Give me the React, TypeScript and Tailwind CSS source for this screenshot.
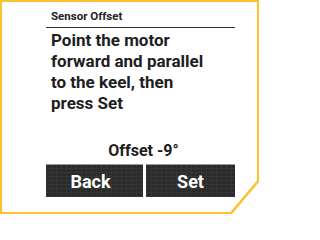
import React from "react";

const btnBg =
  "[background:repeating-linear-gradient(0deg,#363636_0px,#363636_1px,transparent_1px,transparent_4px),repeating-linear-gradient(90deg,#343434_0px,#343434_1px,transparent_1px,transparent_5px),#2a2a2a]";

export default function App() {
  return (
    <div className="w-[259px] h-[215px] bg-white" style={{ fontFamily: 'Roboto, "Noto Sans", sans-serif' }}>
      <div className="w-[259px] h-[214px] p-[2px] bg-[#fbc12e] [clip-path:polygon(0_0,100%_0,100%_182px,232px_100%,0_100%)]">
        <div className="h-full bg-white [clip-path:polygon(0_0,100%_0,100%_178.5px,228.4px_100%,0_100%)] pl-[44px] pr-[22px] pt-[7px] flex flex-col">
          <div className="border-b-[1.5px] border-[#333] pb-[4px]">
            <div className="pl-[5px] text-[11.5px] leading-[14px] font-bold text-[#222]">Sensor Offset</div>
          </div>
          <div className="mt-[2px] pl-[5px] text-[17px] leading-[21px] font-bold text-[#1e1e1e]">
            Point the motor
            <br />
            forward and parallel
            <br />
            to the keel, then
            <br />
            press Set
          </div>
          <div className="mt-[27px] pl-[6px] text-center text-[16px] leading-[20px] font-bold text-[#1e1e1e]">
            Offset -9°
          </div>
          <div className="mt-[3px] flex gap-[3px] h-[33px]">
            <div className={`flex-1 flex items-center justify-center pt-[1px] pr-[8px] border-t border-[#9a9a9a] text-white text-[18px] font-bold ${btnBg}`}>
              Back
            </div>
            <div className={`flex-1 flex items-center justify-center pt-[1px] border-t border-[#9a9a9a] text-white text-[18px] font-bold ${btnBg}`}>
              Set
            </div>
          </div>
        </div>
      </div>
    </div>
  );
}
